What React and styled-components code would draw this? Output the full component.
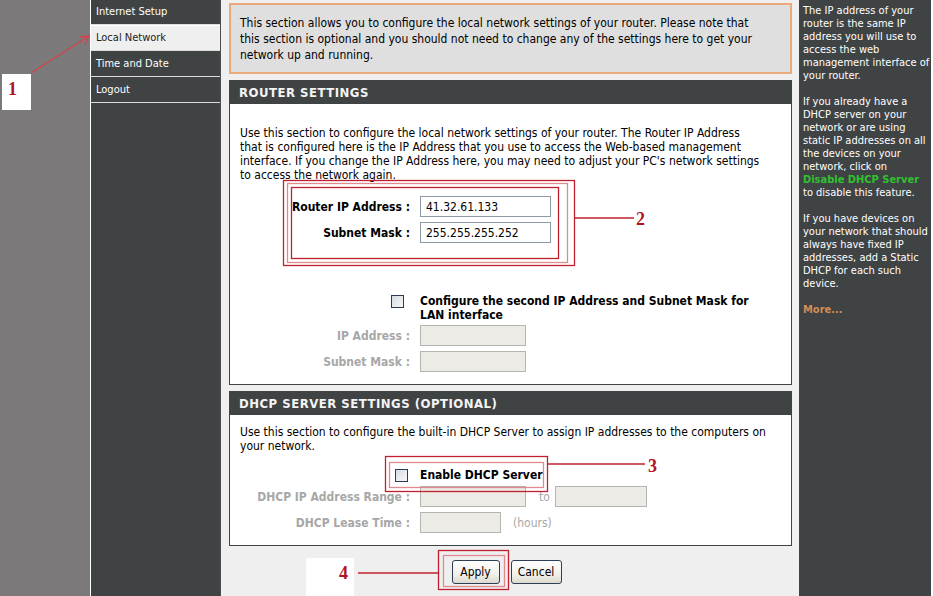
import styled, { createGlobalStyle } from "styled-components";

const FONT = `"DejaVu Sans Condensed", "DejaVu Sans", "Liberation Sans", sans-serif`;
const RED = "#c0202e";

const GlobalStyle = createGlobalStyle`
  html, body {
    margin: 0;
    padding: 0;
    background: #fff;
  }
  body {
    font-family: ${FONT};
    font-size: 12px;
    color: #000;
  }
`;

const Page = styled.div`
  position: relative;
  display: flex;
  width: 933px;
  height: 596px;
  overflow: hidden;
  background: #fff;
`;

const Gutter = styled.div`
  width: 90px;
  flex-shrink: 0;
  background: #7b7979;
  border-right: 1px solid #fff;
`;

const Nav = styled.ul`
  list-style: none;
  margin: -1px 0 0;
  padding: 0;
  width: 129px;
  flex-shrink: 0;
  background: #404344;
  border-right: 1px solid #4c4f50;
`;

const NavItem = styled.li`
  height: 26px;
  box-sizing: border-box;
  line-height: 24px;
  padding-left: 5px;
  font-size: 11px;
  color: ${(p) => (p.$active ? "#222" : "#fff")};
  background: ${(p) => (p.$active ? "#efefef" : "transparent")};
  border-top: 1px solid ${(p) => (p.$active ? "#fff" : "transparent")};
  border-bottom: 1px solid #dcdcdc;
`;

const Main = styled.main`
  width: 578px;
  flex-shrink: 0;
  box-sizing: border-box;
  padding: 3px 7px 0 8px;
  background: #efefef;
  display: flex;
  flex-direction: column;
`;

const Intro = styled.div`
  border: 2px solid #eba97e;
  background: #dfdfdf;
  padding: 10px 9px 9px;
  line-height: 16px;
  white-space: nowrap;
`;

const Section = styled.section`
  margin-top: ${(p) => p.$gap}px;
  border: 1px solid #404344;
  background: #fff;
`;

const SectionHeader = styled.h2`
  margin: 0;
  height: 23px;
  line-height: 24px;
  padding-left: 9px;
  background: #404344;
  color: #f4f4f4;
  font-size: 13px;
  font-weight: bold;
  letter-spacing: 0.5px;
`;

const SectionBody = styled.div`
  padding: ${(p) => p.$top}px 10px 12px;
`;

const Paragraph = styled.p`
  margin: 0;
  line-height: 14px;
  white-space: nowrap;
`;

const FieldRow = styled.div`
  display: grid;
  grid-template-columns: 170px auto;
  column-gap: 10px;
  align-items: center;
  min-height: ${(p) => p.$h || 0}px;
  margin-top: ${(p) => p.$top || 0}px;
`;

const FieldLabel = styled.label`
  text-align: right;
  font-weight: bold;
  white-space: nowrap;
  color: ${(p) => (p.$disabled ? "#a7a7a7" : "#000")};
`;

const CheckCell = styled.div`
  display: flex;
  justify-content: flex-end;
  padding-right: ${(p) => p.$inset}px;
  align-self: ${(p) => p.$align || "center"};
  padding-top: ${(p) => p.$drop || 0}px;
`;

const CheckBox = styled.input.attrs({ type: "checkbox" })`
  appearance: none;
  width: 13px;
  height: 13px;
  margin: 0;
  border: 1px solid #2b3c52;
  background: linear-gradient(135deg, #d6dbe2, #f8f8f8);
  box-sizing: border-box;
`;

const CheckText = styled.div`
  font-weight: bold;
  line-height: 14px;
  white-space: nowrap;
`;

const Fields = styled.div`
  display: flex;
  align-items: center;
  color: #a7a7a7;
`;

const Joiner = styled.span`
  margin: 0 ${(p) => p.$after}px 0 ${(p) => p.$before}px;
`;

const TextInput = styled.input`
  width: ${(p) => p.$w}px;
  height: 21px;
  box-sizing: border-box;
  margin: 0;
  padding: 0 5px;
  font-family: ${FONT};
  font-size: 12px;
  color: #000;
  border: 1px solid ${(p) => (p.disabled ? "#b4b4b0" : "#8d9aa8")};
  background: ${(p) => (p.disabled ? "#ecebe6" : "#fff")};
`;

const Stack = styled.div`
  display: flex;
  flex-direction: column;
  gap: ${(p) => p.$gap}px;
  margin-top: ${(p) => p.$top || 0}px;
`;

const ButtonBar = styled.div`
  display: flex;
  justify-content: center;
  gap: 11px;
  margin-top: 14px;
  padding-right: 8px;
`;

const Button = styled.button`
  width: ${(p) => p.$w}px;
  height: 24px;
  padding: 0;
  font-family: ${FONT};
  font-size: 12px;
  color: #000;
  border: 1px solid #2d3e55;
  border-radius: 3px;
  background: linear-gradient(#ffffff, #f1f0ea 60%, #dcdad0);
`;

const Sidebar = styled.aside`
  width: 132px;
  flex-shrink: 0;
  box-sizing: border-box;
  padding: 4px 0 0 4px;
  background: #404344;
  color: #fff;
  font-size: 11px;
  line-height: 13px;
  white-space: nowrap;
  p {
    margin: 0 0 13px;
  }
`;

const GreenLink = styled.span`
  color: #2fc12f;
  font-weight: bold;
`;

const MoreLink = styled.span`
  color: #d38d55;
  font-weight: bold;
`;

const Annotations = styled.svg`
  position: absolute;
  left: 0;
  top: 0;
  pointer-events: none;
`;

const Tag = styled.div`
  position: absolute;
  left: ${(p) => p.$x}px;
  top: ${(p) => p.$y}px;
  width: ${(p) => p.$w}px;
  height: ${(p) => p.$h}px;
  background: #fff;
`;

const Number = styled.span`
  position: absolute;
  left: ${(p) => p.$x}px;
  top: ${(p) => p.$y}px;
  font-family: "Liberation Serif", serif;
  font-weight: bold;
  font-size: 18px;
  line-height: 18px;
  color: #b0141f;
`;

function Overlay() {
  return (
    <>
      <Tag $x={2} $y={74} $w={29} $h={36} />
      <Tag $x={306} $y={558} $w={48} $h={38} />
      <Annotations width="933" height="596" viewBox="0 0 933 596">
        <g fill="none" stroke={RED} strokeWidth="1.3">
          <line x1="31" y1="73" x2="89" y2="36" stroke="#d2454c" />
          <polyline points="79,37 89,36 85,45" stroke="#d2454c" />
          <rect x="283.5" y="180.5" width="291" height="85" />
          <rect x="287.5" y="183.5" width="280" height="79" stroke="#e08a90" />
          <rect x="291.5" y="187.5" width="267" height="71" />
          <line x1="575" y1="218" x2="634" y2="218" />
          <rect x="385.5" y="456.5" width="162" height="35" />
          <rect x="389.5" y="462.5" width="154" height="25" stroke="#e08a90" />
          <line x1="548" y1="464" x2="645" y2="464" />
          <rect x="438.5" y="550.5" width="70" height="39" />
          <rect x="443.5" y="555.5" width="61" height="31" stroke="#e08a90" />
          <line x1="358" y1="573" x2="438" y2="573" />
        </g>
      </Annotations>
      <Number $x={8} $y={80}>1</Number>
      <Number $x={636} $y={210}>2</Number>
      <Number $x={648} $y={457}>3</Number>
      <Number $x={339} $y={564}>4</Number>
    </>
  );
}

export default function App() {
  return (
    <Page>
      <GlobalStyle />
      <Gutter />
      <Nav>
        <NavItem>Internet Setup</NavItem>
        <NavItem $active>Local Network</NavItem>
        <NavItem>Time and Date</NavItem>
        <NavItem>Logout</NavItem>
      </Nav>
      <Main>
        <Intro>
          This section allows you to configure the local network settings of your router. Please note that
          <br />
          this section is optional and you should not need to change any of the settings here to get your
          <br />
          network up and running.
        </Intro>

        <Section $gap={6}>
          <SectionHeader>ROUTER SETTINGS</SectionHeader>
          <SectionBody $top={22}>
            <Paragraph>
              Use this section to configure the local network settings of your router. The Router IP Address
              <br />
              that is configured here is the IP Address that you use to access the Web-based management
              <br />
              interface. If you change the IP Address here, you may need to adjust your PC's network settings
              <br />
              to access the network again.
            </Paragraph>
            <Stack $gap={5} $top={14}>
              <FieldRow>
                <FieldLabel>Router IP Address :</FieldLabel>
                <TextInput $w={131} defaultValue="41.32.61.133" />
              </FieldRow>
              <FieldRow>
                <FieldLabel>Subnet Mask :</FieldLabel>
                <TextInput $w={131} defaultValue="255.255.255.252" />
              </FieldRow>
            </Stack>
            <FieldRow $top={51}>
              <CheckCell $inset={6} $align="start" $drop={1}>
                <CheckBox />
              </CheckCell>
              <CheckText>
                Configure the second IP Address and Subnet Mask for
                <br />
                LAN interface
              </CheckText>
            </FieldRow>
            <Stack $gap={5} $top={3}>
              <FieldRow>
                <FieldLabel $disabled>IP Address :</FieldLabel>
                <TextInput $w={106} disabled />
              </FieldRow>
              <FieldRow>
                <FieldLabel $disabled>Subnet Mask :</FieldLabel>
                <TextInput $w={106} disabled />
              </FieldRow>
            </Stack>
          </SectionBody>
        </Section>

        <Section $gap={6}>
          <SectionHeader>DHCP SERVER SETTINGS (OPTIONAL)</SectionHeader>
          <SectionBody $top={10}>
            <Paragraph>
              Use this section to configure the built-in DHCP Server to assign IP addresses to the computers on
              <br />
              your network.
            </Paragraph>
            <FieldRow $top={12} $h={20}>
              <CheckCell $inset={2}>
                <CheckBox />
              </CheckCell>
              <CheckText>Enable DHCP Server</CheckText>
            </FieldRow>
            <Stack $gap={5} $top={1}>
              <FieldRow>
                <FieldLabel $disabled>DHCP IP Address Range :</FieldLabel>
                <Fields>
                  <TextInput $w={106} disabled />
                  <Joiner $before={13} $after={5}>to</Joiner>
                  <TextInput $w={92} disabled />
                </Fields>
              </FieldRow>
              <FieldRow>
                <FieldLabel $disabled>DHCP Lease Time :</FieldLabel>
                <Fields>
                  <TextInput $w={81} disabled />
                  <Joiner $before={12} $after={0}>(hours)</Joiner>
                </Fields>
              </FieldRow>
            </Stack>
          </SectionBody>
        </Section>

        <ButtonBar>
          <Button $w={48}>Apply</Button>
          <Button $w={51}>Cancel</Button>
        </ButtonBar>
      </Main>
      <Sidebar>
        <p>
          The IP address of your
          <br />
          router is the same IP
          <br />
          address you will use to
          <br />
          access the web
          <br />
          management interface of
          <br />
          your router.
        </p>
        <p>
          If you already have a
          <br />
          DHCP server on your
          <br />
          network or are using
          <br />
          static IP addresses on all
          <br />
          the devices on your
          <br />
          network, click on
          <br />
          <GreenLink>Disable DHCP Server</GreenLink>
          <br />
          to disable this feature.
        </p>
        <p>
          If you have devices on
          <br />
          your network that should
          <br />
          always have fixed IP
          <br />
          addresses, add a Static
          <br />
          DHCP for each such
          <br />
          device.
        </p>
        <p>
          <MoreLink>More...</MoreLink>
        </p>
      </Sidebar>
      <Overlay />
    </Page>
  );
}
